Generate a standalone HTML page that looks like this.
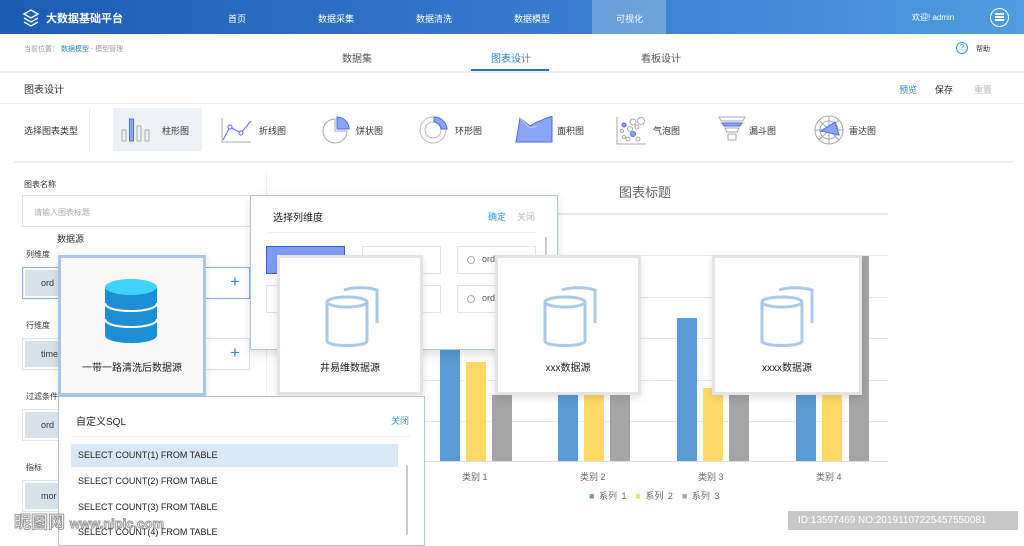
<!DOCTYPE html>
<html><head><meta charset="utf-8"><style>
*{margin:0;padding:0;box-sizing:border-box}
body{width:1024px;height:541px;overflow:hidden;position:relative;background:#fff;font-family:"Liberation Sans","Noto Sans CJK SC",sans-serif;color:#333;font-size:9px}
.a{position:absolute;white-space:nowrap}
.hdr{left:0;top:0;width:1024px;height:34px;background:linear-gradient(90deg,#1a5cb3,#3579cc 50%,#4f9de0)}
.box{position:absolute;border:1px solid #dde3ea;background:#fff}
.chip{position:absolute;background:#d7e1ea;color:#333;font-size:9px;padding-left:16px;line-height:26px}
.plus{position:absolute;color:#2a83d9;font-size:17px;font-weight:300}
.card{position:absolute;background:#fff;border:3px solid #e4e4e4;width:146px;height:140px;top:255px;box-shadow:0 3px 8px rgba(0,0,0,.12)}
.card .t{position:absolute;left:0;right:0;top:101px;text-align:center;font-size:10px;color:#222}
.card svg{position:absolute;left:44px;top:26px}
.bar{position:absolute;width:20px}
.gl{position:absolute;left:420px;width:468px;height:1px;background:#e8e8e8}
.opt{position:absolute;border:1px solid #e3e3e3;background:#fff;width:79px;height:28px}
</style></head><body>
<div class="a hdr"></div>
<svg class="a" style="left:22px;top:9px" width="18" height="18" viewBox="0 0 18 18" fill="none" stroke="#fff" stroke-width="1.4"><path d="M9 1L2 5l7 4 7-4z"/><path d="M2 9l7 4 7-4"/><path d="M2 13l7 4 7-4"/></svg>
<div class="a" style="left:46px;top:10px;color:#fff;font-size:11px;font-weight:bold">大数据基础平台</div>
<div class="a" style="left:592px;top:0;width:74px;height:34px;background:rgba(255,255,255,.25)"></div>
<div class="a" style="left:228px;top:12px;color:#fff">首页</div>
<div class="a" style="left:318px;top:12px;color:#fff">数据采集</div>
<div class="a" style="left:416px;top:12px;color:#fff">数据清洗</div>
<div class="a" style="left:514px;top:12px;color:#fff">数据模型</div>
<div class="a" style="left:616px;top:12px;color:#fff">可视化</div>
<div class="a" style="left:912px;top:12px;color:#fff;font-size:8px">欢迎! admin</div>
<div class="a" style="left:990px;top:8px;width:19px;height:19px;border:1.5px solid #fff;border-radius:50%"></div>
<div class="a" style="left:995px;top:13px;width:9px;height:1.5px;background:#fff;box-shadow:0 3px 0 #fff,0 6px 0 #fff"></div>

<div class="a" style="left:24px;top:44px;font-size:7px;color:#999">当前位置： <span style="color:#2a83d9">数据模型</span> - 模型管理</div>
<div class="a" style="left:342px;top:50px;font-size:10px;color:#555">数据集</div>
<div class="a" style="left:491px;top:50px;font-size:10px;color:#2a83d9">图表设计</div>
<div class="a" style="left:641px;top:50px;font-size:10px;color:#555">看板设计</div>
<div class="a" style="left:471px;top:69px;width:78px;height:3px;background:#2a6fc4"></div>
<div class="a" style="left:956px;top:42px;width:12px;height:12px;border:1px solid #2a9de0;border-radius:50%;color:#2a9de0;font-size:8px;text-align:center;line-height:10px">?</div>
<div class="a" style="left:976px;top:44px;font-size:7px">帮助</div>
<div class="a" style="left:0;top:71px;width:1024px;height:2px;background:#f0f0f0"></div>

<div class="a" style="left:24px;top:81px;font-size:10px">图表设计</div>
<div class="a" style="left:899px;top:83px;color:#2a83d9">预览</div>
<div class="a" style="left:935px;top:83px;color:#222">保存</div>
<div class="a" style="left:974px;top:83px;color:#bbb">重置</div>
<div class="a" style="left:0;top:103px;width:1024px;height:1px;background:#eee"></div>

<div class="a" style="left:24px;top:124px">选择图表类型</div>
<div class="a" style="left:89px;top:108px;width:1px;height:43px;background:#e8e8e8"></div>
<div class="a" style="left:113px;top:108px;width:89px;height:43px;background:#edf1f5"></div>
<svg class="a" style="left:120px;top:117px" width="32" height="26"><g stroke="#aaa" fill="none"><rect x="2" y="13" width="4" height="11"/><rect x="17" y="9" width="4" height="15"/><rect x="25" y="13" width="4" height="11"/></g><rect x="9.5" y="2" width="4" height="22" fill="#8aa6f5" stroke="#4a6ef0"/></svg>
<div class="a" style="left:162px;top:124px">柱形图</div>
<svg class="a" style="left:221px;top:117px" width="32" height="26"><path d="M1 1v24h29" stroke="#aaa" fill="none"/><path d="M2 23l7-13 11 6 10-12" stroke="#4a6ef0" fill="none"/><circle cx="9" cy="10" r="2" fill="#fff" stroke="#4a6ef0"/><circle cx="20" cy="16" r="2" fill="#fff" stroke="#4a6ef0"/></svg>
<div class="a" style="left:259px;top:124px">折线图</div>
<svg class="a" style="left:321px;top:115px" width="30" height="30"><path d="M14 4A12 12 0 1 0 26 16H14z" fill="#fff" stroke="#aaa"/><path d="M16 2A12 12 0 0 1 28 14H16z" fill="#8aa6f5" stroke="#4a6ef0"/></svg>
<div class="a" style="left:356px;top:124px">饼状图</div>
<svg class="a" style="left:418px;top:115px" width="32" height="30"><circle cx="15" cy="15" r="13" fill="none" stroke="#bbb"/><circle cx="15" cy="15" r="8" fill="none" stroke="#bbb"/><path d="M16 2A13 13 0 0 1 29 14H23A8 8 0 0 0 16 7z" fill="#8aa6f5" stroke="#4a6ef0"/></svg>
<div class="a" style="left:455px;top:124px">环形图</div>
<svg class="a" style="left:515px;top:116px" width="38" height="28"><path d="M1 26L5 2l10 8 7-4 15-6v26z" fill="#8aa6f5" stroke="#4a6ef0"/><path d="M5 2l10 10 7-2" stroke="#ccc" fill="none"/></svg>
<div class="a" style="left:557px;top:124px">面积图</div>
<svg class="a" style="left:616px;top:115px" width="32" height="30"><path d="M1 2v27h29" stroke="#aaa" fill="none"/><g fill="none" stroke="#aaa"><circle cx="17" cy="7" r="3"/><circle cx="25" cy="6" r="3.5"/><circle cx="14" cy="14" r="2.5"/><circle cx="21" cy="12" r="2"/><circle cx="6" cy="16" r="1.5"/><circle cx="8" cy="22" r="1.5"/><circle cx="12" cy="24" r="2"/><circle cx="22" cy="24" r="2"/></g><circle cx="8" cy="10" r="2" fill="#8aa6f5" stroke="#4a6ef0"/><circle cx="17" cy="19" r="2.5" fill="#8aa6f5" stroke="#4a6ef0"/></svg>
<div class="a" style="left:653px;top:124px">气泡图</div>
<svg class="a" style="left:718px;top:116px" width="28" height="26"><path d="M1 1h26l-2 4H3z" fill="#fff" stroke="#aaa"/><path d="M4 7h20l-2 3H6z" fill="#8aa6f5" stroke="#4a6ef0"/><path d="M7 12h14l-2 4H9z" fill="#fff" stroke="#aaa"/><rect x="10" y="18" width="8" height="6" fill="#fff" stroke="#aaa"/></svg>
<div class="a" style="left:749px;top:124px">漏斗图</div>
<svg class="a" style="left:813px;top:114px" width="32" height="32"><g fill="none" stroke="#aaa"><circle cx="16" cy="16" r="14"/><circle cx="16" cy="16" r="9"/><path d="M16 2v28M2 16h28M6 6l20 20M26 6L6 26"/></g><path d="M8 17l14-9 4 13z" fill="#8aa6f5" stroke="#4a6ef0"/></svg>
<div class="a" style="left:849px;top:124px">雷达图</div>
<div class="a" style="left:14px;top:161px;width:1000px;height:2px;background:#f2f2f2"></div>

<div class="a" style="left:24px;top:179px;font-size:8px">图表名称</div>
<div class="box" style="left:22px;top:195px;width:240px;height:32px"></div>
<div class="a" style="left:34px;top:207px;font-size:8px;color:#aaa">请输入图表标题</div>
<div class="a" style="left:266px;top:170px;width:1px;height:371px;background:#eee"></div>
<div class="a" style="left:57px;top:232px;font-size:9px">数据源</div>
<div class="a" style="left:26px;top:249px;font-size:8px">列维度</div>
<div class="box" style="left:22px;top:267px;width:228px;height:32px;border-color:#8ab1e6"></div>
<div class="chip" style="left:25px;top:270px;width:40px">ord</div>
<div class="plus" style="left:230px;top:272px">+</div>
<div class="a" style="left:26px;top:320px;font-size:8px">行维度</div>
<div class="box" style="left:22px;top:338px;width:228px;height:32px"></div>
<div class="chip" style="left:25px;top:341px;width:40px">time</div>
<div class="plus" style="left:230px;top:343px">+</div>
<div class="a" style="left:26px;top:391px;font-size:8px">过滤条件</div>
<div class="box" style="left:22px;top:409px;width:228px;height:32px"></div>
<div class="chip" style="left:25px;top:412px;width:40px">ord</div>
<div class="a" style="left:26px;top:462px;font-size:8px">指标</div>
<div class="box" style="left:22px;top:480px;width:228px;height:32px"></div>
<div class="chip" style="left:25px;top:483px;width:40px">mor</div>

<div class="a" style="left:619px;top:182px;font-size:13px;color:#666">图表标题</div>
<div class="gl" style="top:213px;height:2px"></div>
<div class="gl" style="top:255px"></div><div class="gl" style="top:297px"></div><div class="gl" style="top:338px"></div><div class="gl" style="top:380px"></div><div class="gl" style="top:421px"></div><div class="gl" style="top:461px;background:#ddd"></div>
<div class="bar" style="left:440px;top:300px;height:161px;background:#5b9bd5"></div>
<div class="bar" style="left:466px;top:362px;height:99px;background:#ffd966"></div>
<div class="bar" style="left:492px;top:395px;height:66px;background:#a5a5a5"></div>
<div class="bar" style="left:558px;top:380px;height:81px;background:#5b9bd5"></div>
<div class="bar" style="left:584px;top:380px;height:81px;background:#ffd966"></div>
<div class="bar" style="left:610px;top:380px;height:81px;background:#a5a5a5"></div>
<div class="bar" style="left:677px;top:318px;height:143px;background:#5b9bd5"></div>
<div class="bar" style="left:703px;top:388px;height:73px;background:#ffd966"></div>
<div class="bar" style="left:729px;top:390px;height:71px;background:#a5a5a5"></div>
<div class="bar" style="left:796px;top:380px;height:81px;background:#5b9bd5"></div>
<div class="bar" style="left:822px;top:380px;height:81px;background:#ffd966"></div>
<div class="bar" style="left:849px;top:256px;height:205px;background:#a5a5a5"></div>
<div class="a" style="left:462px;top:470px;color:#666">类别 1</div>
<div class="a" style="left:580px;top:470px;color:#666">类别 2</div>
<div class="a" style="left:698px;top:470px;color:#666">类别 3</div>
<div class="a" style="left:816px;top:470px;color:#666">类别 4</div>
<div class="a" style="left:589px;top:489px;color:#666;word-spacing:2px"><span style="color:#5b9bd5">■</span> 系列 1 &nbsp;<span style="color:#ffd966">■</span> 系列 2 &nbsp;<span style="color:#a5a5a5">■</span> 系列 3</div>

<div class="a" style="left:250px;top:195px;width:308px;height:155px;background:#fff;border:1px solid #a9c6e6;box-shadow:0 4px 10px rgba(0,0,0,.12)"></div>
<div class="a" style="left:273px;top:209px;font-size:10px;color:#222">选择列维度</div>
<div class="a" style="left:488px;top:210px;color:#2a9de0">确定</div>
<div class="a" style="left:517px;top:210px;color:#bbb">关闭</div>
<div class="a" style="left:267px;top:232px;width:270px;height:1px;background:#eee"></div>
<div class="a" style="left:545px;top:237px;width:2px;height:40px;background:#ccc"></div>
<div class="opt" style="left:266px;top:246px;background:#7f9cf5;border-color:#3c5fd0"></div>
<div class="opt" style="left:362px;top:246px"></div>
<div class="opt" style="left:457px;top:246px"></div>
<div class="opt" style="left:266px;top:285px"></div>
<div class="opt" style="left:362px;top:285px"></div>
<div class="opt" style="left:457px;top:285px"></div>
<div class="a" style="left:467px;top:256px;width:8px;height:8px;border:1px solid #aaa;border-radius:50%"></div>
<div class="a" style="left:482px;top:254px;color:#555">ord</div>
<div class="a" style="left:467px;top:295px;width:8px;height:8px;border:1px solid #aaa;border-radius:50%"></div>
<div class="a" style="left:482px;top:293px;color:#555">ord</div>

<div class="card" style="left:58px;width:148px;height:141px;background:#f8f8f8;border-color:#a9c6e6">
<svg style="left:42px;top:20px" width="56" height="66" viewBox="0 0 56 66"><path d="M2 9v48c0 5 11 8 26 8s26-3 26-8V9z" fill="#1b8fd6"/><ellipse cx="28" cy="9" rx="26" ry="8" fill="#3fd2fb"/><path d="M2 25c0 5 11 8 26 8s26-3 26-8M2 41c0 5 11 8 26 8s26-3 26-8" stroke="#fff" stroke-width="2" fill="none"/></svg>
<div class="t">一带一路清洗后数据源</div></div>
<div class="card" style="left:277px"><svg width="56" height="66" viewBox="0 0 56 66" fill="none" stroke="#a9c9e6" stroke-width="3"><path d="M20 6c8-3 24-3 33 0v33"/><ellipse cx="23" cy="18" rx="20" ry="5"/><path d="M3 18v39c0 6 40 6 40 0V18"/></svg><div class="t">井易维数据源</div></div>
<div class="card" style="left:495px"><svg width="56" height="66" viewBox="0 0 56 66" fill="none" stroke="#a9c9e6" stroke-width="3"><path d="M20 6c8-3 24-3 33 0v33"/><ellipse cx="23" cy="18" rx="20" ry="5"/><path d="M3 18v39c0 6 40 6 40 0V18"/></svg><div class="t">xxx数据源</div></div>
<div class="card" style="left:712px;width:150px"><svg width="56" height="66" viewBox="0 0 56 66" fill="none" stroke="#a9c9e6" stroke-width="3"><path d="M20 6c8-3 24-3 33 0v33"/><ellipse cx="23" cy="18" rx="20" ry="5"/><path d="M3 18v39c0 6 40 6 40 0V18"/></svg><div class="t">xxxx数据源</div></div>

<div class="a" style="left:58px;top:396px;width:367px;height:150px;background:#fff;border:1px solid #a9c6e6"></div>
<div class="a" style="left:76px;top:413px;font-size:10px;color:#222">自定义SQL</div>
<div class="a" style="left:391px;top:414px;color:#2a9de0">关闭</div>
<div class="a" style="left:71px;top:436px;width:339px;height:1px;background:#eee"></div>
<div class="a" style="left:71px;top:444px;width:327px;height:23px;background:#d8e8f6"></div>
<div class="a" style="left:406px;top:465px;width:2px;height:70px;background:#ccc"></div>
<div class="a" style="left:78px;top:450px;color:#222">SELECT COUNT(1) FROM TABLE</div>
<div class="a" style="left:78px;top:476px;color:#222">SELECT COUNT(2) FROM TABLE</div>
<div class="a" style="left:78px;top:502px;color:#222">SELECT COUNT(3) FROM TABLE</div>
<div class="a" style="left:78px;top:527px;color:#222">SELECT COUNT(4) FROM TABLE</div>

<div class="a" style="left:14px;top:508px;font-size:17px;color:rgba(255,255,255,.8);-webkit-text-stroke:1px #999;font-weight:bold">昵图网 <span style="font-size:13px">www.nipic.com</span></div>
<div class="a" style="left:788px;top:511px;width:230px;height:19px;background:#c8c8c8;color:#fff;font-size:10px;line-height:19px;padding-left:10px">ID:13597469 NO:20191107225457550081</div>
</body></html>
